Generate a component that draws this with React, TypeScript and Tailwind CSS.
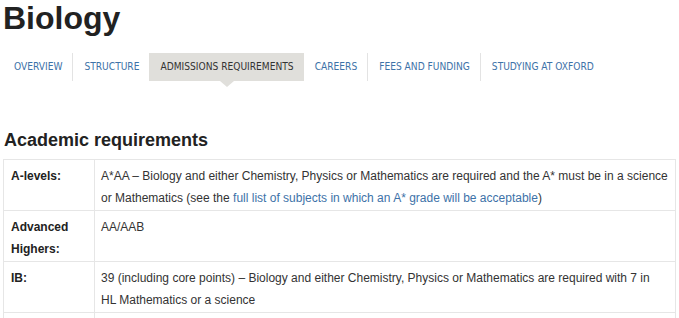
const tabs = [
  "Overview",
  "Structure",
  "Admissions requirements",
  "Careers",
  "Fees and funding",
  "Studying at Oxford",
];

type Row = {
  label: React.ReactNode;
  body: React.ReactNode;
};

const rows: Row[] = [
  {
    label: "A-levels:",
    body: (
      <>
        A*AA – Biology and either Chemistry, Physics or Mathematics are required and the A* must be in a science or
        Mathematics (see the{" "}
        <a href="#" className="text-[#3d72a8]">
          full list of subjects in which an A* grade will be acceptable
        </a>
        )
      </>
    ),
  },
  {
    label: (
      <>
        Advanced
        <br />
        Highers:
      </>
    ),
    body: "AA/AAB",
  },
  {
    label: "IB:",
    body: (
      <>
        39 (including core points) – Biology and either Chemistry, Physics or Mathematics are required with 7 in
        <br />
        HL Mathematics or a science
      </>
    ),
  },
];

export default function App() {
  return (
    <div className="h-[318px] w-[679px] overflow-hidden bg-white font-['Liberation_Sans',sans-serif] text-[#333]">
      <h1 className="pl-[3px] text-[32px] font-bold leading-[36px] text-[#222]">Biology</h1>

      <nav className="mt-[17px] flex h-[28px] pl-[3px] font-['DejaVu_Sans_Condensed','Liberation_Sans',sans-serif]">
        {tabs.map((t, i) => {
          const active = i === 2;
          const sep = i < tabs.length - 1 && i !== 1 && !active;
          return (
            <div
              key={t}
              className={
                "relative flex shrink-0 items-center whitespace-nowrap pl-[11px] pr-[10px] text-[10.15px] uppercase " +
                (active ? "bg-[#e0dfdb] text-[#333]" : "text-[#3d72a8]") +
                (sep ? " border-r border-[#e3e3e3]" : "")
              }
            >
              {t}
              {active && (
                <span className="absolute left-1/2 top-full -translate-x-1/2 border-x-[7px] border-t-[6px] border-x-transparent border-t-[#e0dfdb]" />
              )}
            </div>
          );
        })}
      </nav>

      <h2 className="mt-[46px] pl-[4px] text-[18px] font-bold leading-[26px] text-[#222]">Academic requirements</h2>

      <table className="ml-[3px] mt-[6px] w-[673px] border-collapse text-[12px] leading-[22px]">
        <tbody>
          {rows.map((r, i) => (
            <tr key={i} className="h-[51px] align-top">
              <th className="w-[91px] border border-[#e6e6e6] px-[7px] pt-[5px] text-left font-bold text-[#222]">
                {r.label}
              </th>
              <td className="border border-[#e6e6e6] px-[6px] pt-[5px]">{r.body}</td>
            </tr>
          ))}
          <tr className="h-[20px]">
            <th className="border border-[#e6e6e6]" />
            <td className="border border-[#e6e6e6]" />
          </tr>
        </tbody>
      </table>
    </div>
  );
}
